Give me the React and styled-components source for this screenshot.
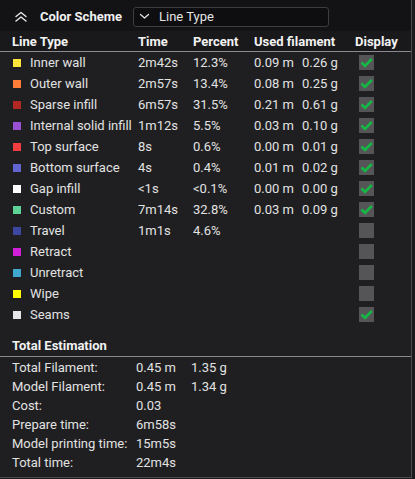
import styled, { createGlobalStyle } from "styled-components";

const GlobalStyle = createGlobalStyle`
    html, body {
        margin: 0;
        padding: 0;
        background: #1b1b1d;
    }
    body {
        font-family: Roboto, "Noto Sans", sans-serif;
        width: 415px;
        height: 479px;
        overflow: hidden;
    }
`;

const lineTypes = [
    { name: 'Inner wall', color: '#ffe53b', time: '2m42s', percent: '12.3%', meters: '0.09 m', grams: '0.26 g', shown: true },
    { name: 'Outer wall', color: '#ff7d38', time: '2m57s', percent: '13.4%', meters: '0.08 m', grams: '0.25 g', shown: true },
    { name: 'Sparse infill', color: '#b0281f', time: '6m57s', percent: '31.5%', meters: '0.21 m', grams: '0.61 g', shown: true },
    { name: 'Internal solid infill', color: '#9a50d2', time: '1m12s', percent: '5.5%', meters: '0.03 m', grams: '0.10 g', shown: true },
    { name: 'Top surface', color: '#f03d3d', time: '8s', percent: '0.6%', meters: '0.00 m', grams: '0.01 g', shown: true },
    { name: 'Bottom surface', color: '#6464d2', time: '4s', percent: '0.4%', meters: '0.01 m', grams: '0.02 g', shown: true },
    { name: 'Gap infill', color: '#ffffff', time: '<1s', percent: '<0.1%', meters: '0.00 m', grams: '0.00 g', shown: true },
    { name: 'Custom', color: '#5ed194', time: '7m14s', percent: '32.8%', meters: '0.03 m', grams: '0.09 g', shown: true },
    { name: 'Travel', color: '#3b47a3', time: '1m1s', percent: '4.6%', meters: '', grams: '', shown: false },
    { name: 'Retract', color: '#d11fd9', time: '', percent: '', meters: '', grams: '', shown: false },
    { name: 'Unretract', color: '#3fa8cc', time: '', percent: '', meters: '', grams: '', shown: false },
    { name: 'Wipe', color: '#ffff00', time: '', percent: '', meters: '', grams: '', shown: false },
    { name: 'Seams', color: '#e6e6e6', time: '', percent: '', meters: '', grams: '', shown: true },
];

const totals = [
    { label: 'Total Filament:', value: '0.45 m', extra: '1.35 g' },
    { label: 'Model Filament:', value: '0.45 m', extra: '1.34 g' },
    { label: 'Cost:', value: '0.03' },
    { label: 'Prepare time:', value: '6m58s' },
    { label: 'Model printing time:', value: '15m5s' },
    { label: 'Total time:', value: '22m4s' },
];

const CollapseIcon = () => (
    <svg width="14" height="12" viewBox="0 0 14 12" fill="none" stroke="#e8e8e8" strokeWidth="1.4" strokeLinecap="round" strokeLinejoin="round">
        <polyline points="2,5.5 7,1.5 12,5.5" />
        <polyline points="2,10 7,6 12,10" />
    </svg>
);

const ChevronDown = () => (
    <svg width="11" height="7" viewBox="0 0 11 7" fill="none" stroke="#e0e0e0" strokeWidth="1.3" strokeLinecap="round" strokeLinejoin="round">
        <polyline points="1.5,1.5 5.5,5 9.5,1.5" />
    </svg>
);

const CheckMark = () => (
    <svg width="13" height="13" viewBox="0 0 13 13" fill="none" stroke="#14b844" strokeWidth="2.6" strokeLinejoin="miter">
        <polyline points="1.5,6.5 5,10 11.8,3" />
    </svg>
);

const App = () => {
    return (
        <>
            <GlobalStyle />
            <Panel>
                <TopBar>
                    <CollapseIcon />
                    <TopTitle>Color Scheme</TopTitle>
                    <Select>
                        <ChevronDown />
                        <span>Line Type</span>
                    </Select>
                </TopBar>

                <HeaderRow>
                    <HeadCell>Line Type</HeadCell>
                    <HeadCell>Time</HeadCell>
                    <HeadCell>Percent</HeadCell>
                    <HeadCell $span={2}>Used filament</HeadCell>
                    <HeadCell>Display</HeadCell>
                </HeaderRow>

                <Rows>
                    {
                        lineTypes.map((item) => (
                            <Row key={item.name}>
                                <NameCell>
                                    <Swatch $color={item.color} />
                                    {item.name}
                                </NameCell>
                                <Cell>{item.time}</Cell>
                                <Cell>{item.percent}</Cell>
                                <Cell>{item.meters}</Cell>
                                <Cell>{item.grams}</Cell>
                                <Cell>
                                    <CheckBox>
                                        {item.shown && <CheckMark />}
                                    </CheckBox>
                                </Cell>
                            </Row>
                        ))
                    }
                </Rows>

                <SectionTitle>Total Estimation</SectionTitle>

                <Totals>
                    {
                        totals.map((t) => (
                            <TotalRow key={t.label}>
                                <span>{t.label}</span>
                                <span>{t.value}</span>
                                <span>{t.extra || ''}</span>
                            </TotalRow>
                        ))
                    }
                </Totals>
            </Panel>
        </>
    );
};

const Panel = styled.div`
    width: 411px;
    height: 477px;
    box-sizing: content-box;
    background-color: #1f1f21;
    border-right: 1px solid #4a4a50;
    border-bottom: 1px solid #4a4a50;
    color: #e2e2e2;
    font-size: 13px;
    display: flex;
    flex-direction: column;
`;

const TopBar = styled.div`
    height: 31px;
    display: flex;
    align-items: center;
    padding-left: 14px;
    background-color: #131315;
    box-sizing: border-box;
    padding-top: 2px;
`;

const TopTitle = styled.div`
    font-weight: 700;
    font-size: 13px;
    color: #f0f0f0;
    margin-left: 12px;
    margin-right: 11px;
`;

const Select = styled.div`
    width: 196px;
    height: 20px;
    box-sizing: border-box;
    border: 1px solid #3d3d40;
    border-radius: 3px;
    background-color: #0e0e10;
    display: flex;
    align-items: center;
    gap: 9px;
    padding-left: 5px;
    font-size: 13px;
    color: #e4e4e4;
`;

const columns = `125px 55px 61px 48px 53px 1fr`;

const HeaderRow = styled.div`
    display: grid;
    grid-template-columns: 126px 55px 61px 101px 1fr;
    height: 20px;
    align-items: center;
    padding-left: 12px;
    background-color: #19191b;
    border-bottom: 1px solid #8a8a8e;
`;

const HeadCell = styled.div`
    font-weight: 700;
    font-size: 13px;
    color: #f2f2f2;
    white-space: nowrap;
`;

const Rows = styled.div`
    display: flex;
    flex-direction: column;
`;

const Row = styled.div`
    display: grid;
    grid-template-columns: ${columns};
    height: 21px;
    align-items: center;
    padding-left: 13px;
`;

const Cell = styled.div`
    white-space: nowrap;
    display: flex;
    align-items: center;
`;

const NameCell = styled(Cell)`
    gap: 9px;
`;

const Swatch = styled.span`
    width: 8px;
    height: 8px;
    background-color: ${(props) => props.$color};
`;

const CheckBox = styled.div`
    width: 15px;
    height: 15px;
    margin-left: 4px;
    background-color: #555557;
    display: flex;
    align-items: center;
    justify-content: center;
`;

const SectionTitle = styled.div`
    margin-top: 9px;
    height: 22px;
    display: flex;
    align-items: center;
    padding-left: 12px;
    font-weight: 700;
    font-size: 13px;
    color: #f2f2f2;
    border-bottom: 1px solid #8a8a8e;
`;

const Totals = styled.div`
    display: flex;
    flex-direction: column;
    padding-top: 1px;
`;

const TotalRow = styled.div`
    display: grid;
    grid-template-columns: 124px 55px 1fr;
    height: 19px;
    align-items: center;
    padding-left: 12px;
    white-space: nowrap;
`;

export default App;
